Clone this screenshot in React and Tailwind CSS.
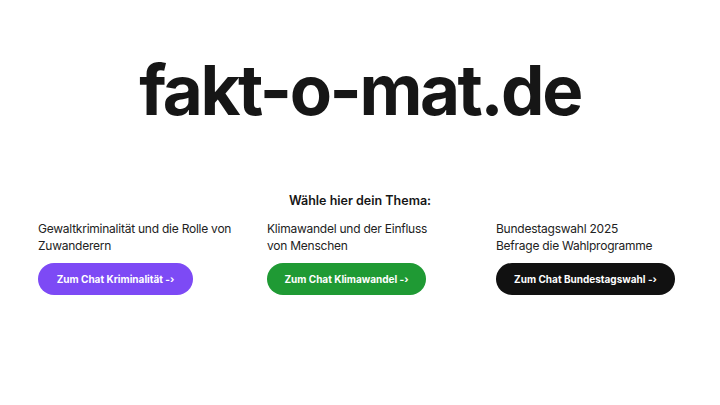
export default function App() {
  const cols = [
    { t1: "Gewaltkriminalität und die Rolle von", t2: "Zuwanderern", btn: "Zum Chat Kriminalität -›", bg: "bg-[#7d4af5]", w: "w-[155px]" },
    { t1: "Klimawandel und der Einfluss", t2: "von Menschen", btn: "Zum Chat Klimawandel -›", bg: "bg-[#1f9a34]", w: "w-[159px]" },
    { t1: "Bundestagswahl 2025", t2: "Befrage die Wahlprogramme", btn: "Zum Chat Bundestagswahl -›", bg: "bg-[#111111]", w: "w-[179px]" },
  ];
  return (
    <div className="w-[720px] h-[405px] bg-white text-[#161616] overflow-hidden [font-feature-settings:'calt'_0]" style={{ fontFamily: "Inter, 'Noto Sans', sans-serif" }}>
      <h1 className="pt-[45px] text-center text-[69px] leading-[90px] font-bold tracking-[-0.035em]">fakt-o-mat.de</h1>
      <div className="mt-[56px] text-center text-[12.5px] font-semibold leading-[20px]">Wähle hier dein Thema:</div>
      <div className="mt-[9px] flex pl-[38px] gap-[40px]">
        {cols.map((c, i) => (
          <div key={i} className="w-[189px] flex flex-col items-start">
            <div className="text-[12px] leading-[17px] text-[#222] whitespace-nowrap tracking-[-0.02em]">
              <div>{c.t1}</div>
              <div>{c.t2}</div>
            </div>
            <button className={`mt-[9px] h-[32px] ${c.w} ${c.bg} rounded-full text-white text-[10px] font-bold flex items-center justify-center`}>{c.btn}</button>
          </div>
        ))}
      </div>
    </div>
  );
}
